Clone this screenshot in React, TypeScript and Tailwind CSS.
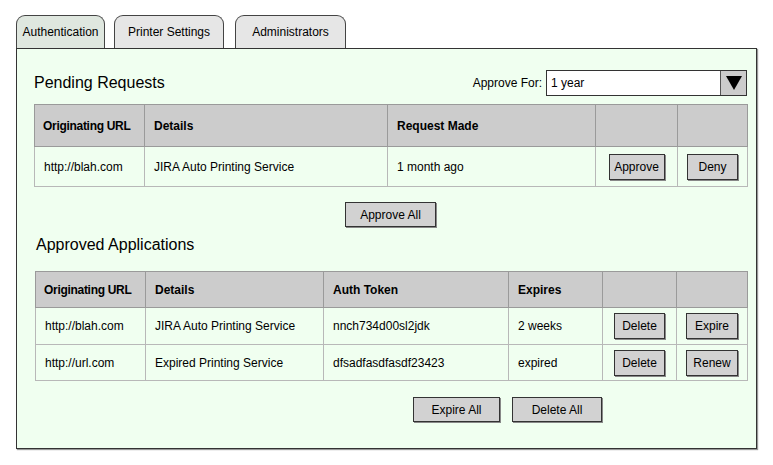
import React from "react";

const font = { fontFamily: '"Liberation Sans", Arial, sans-serif' };

function Btn({ children, className = "" }: { children: React.ReactNode; className?: string }) {
  return (
    <div
      className={
        "flex items-center justify-center bg-[#d2d2d2] border border-[#333] text-[12px] text-black shadow-[1px_1px_0_#888] " +
        className
      }
    >
      {children}
    </div>
  );
}

export default function App() {
  const th = "bg-[#cccccc] border border-[#9a9a9a] text-left font-bold text-[12px] px-[9px] align-middle whitespace-nowrap";
  const th1 = "bg-[#cccccc] border border-[#9a9a9a] text-left font-bold text-[12px] pl-[8px] pr-0 align-middle whitespace-nowrap tracking-[-0.3px]";
  const td = "border border-[#b8b8b8] text-[12px] px-[9px] align-middle whitespace-nowrap";
  return (
    <div className="w-[773px] h-[465px] bg-white text-black" style={font}>
      <div className="pt-[15px] pl-[16px]">
        <div className="flex items-end h-[33px]">
          <div className="w-[89px] h-[33px] bg-[#dfe7df] border border-[#444] border-b-0 rounded-t-[9px] flex items-center justify-center text-[12px] relative z-10">
            Authentication
          </div>
          <div className="ml-[9px] w-[110px] h-[33px] bg-[#e6e6e6] border border-[#444] border-b-0 rounded-t-[9px] flex items-center justify-center text-[12px]">
            Printer Settings
          </div>
          <div className="ml-[11px] w-[111px] h-[33px] bg-[#e6e6e6] border border-[#444] border-b-0 rounded-t-[9px] flex items-center justify-center text-[12px]">
            Administrators
          </div>
        </div>
        <div className="w-[741px] h-[401px] bg-[#f0fff0] border border-[#333] shadow-[1px_1px_1px_#999] pl-[17px] pr-[9px] pt-[21px]">
          <div className="flex items-center h-[26px]">
            <div className="text-[16px] flex-1">Pending Requests</div>
            <div className="text-[12px] mr-[4px]">Approve For:</div>
            <div className="w-[201px] h-[26px] bg-white border border-[#333] flex">
              <div className="flex-1 flex items-center pl-[4px] text-[12px]">1 year</div>
              <div className="w-[26px] bg-[#cccccc] border-l border-[#555] flex items-center justify-center">
                <svg width="16" height="14" viewBox="0 0 16 14">
                  <polygon points="0,0 16,0 8,14" fill="#000" />
                </svg>
              </div>
            </div>
          </div>
          <table className="mt-[8px] border-collapse w-[713px] table-fixed">
            <colgroup>
              <col className="w-[110px]" />
              <col className="w-[243px]" />
              <col className="w-[208px]" />
              <col className="w-[82px]" />
              <col className="w-[70px]" />
            </colgroup>
            <thead>
              <tr className="h-[42px]">
                <th className={th1}>Originating URL</th>
                <th className={th}>Details</th>
                <th className={th}>Request Made</th>
                <th className={th}></th>
                <th className={th}></th>
              </tr>
            </thead>
            <tbody>
              <tr className="h-[40px]">
                <td className={td}>http://blah.com</td>
                <td className={td}>JIRA Auto Printing Service</td>
                <td className={td}>1 month ago</td>
                <td className={td + " px-0"}>
                  <div className="flex justify-center">
                    <Btn className="w-[56px] h-[26px]">Approve</Btn>
                  </div>
                </td>
                <td className={td + " px-0"}>
                  <div className="flex justify-center">
                    <Btn className="w-[52px] h-[26px]">Deny</Btn>
                  </div>
                </td>
              </tr>
            </tbody>
          </table>
          <div className="w-[713px] flex justify-center mt-[15px]">
            <Btn className="w-[91px] h-[25px]">Approve All</Btn>
          </div>
          <div className="text-[16px] ml-[2px] mt-[7px] h-[22px] leading-[22px]">Approved Applications</div>
          <table className="mt-[15px] ml-[1px] border-collapse w-[712px] table-fixed">
            <colgroup>
              <col className="w-[110px]" />
              <col className="w-[178px]" />
              <col className="w-[185px]" />
              <col className="w-[94px]" />
              <col className="w-[74px]" />
              <col className="w-[71px]" />
            </colgroup>
            <thead>
              <tr className="h-[36px]">
                <th className={th1}>Originating URL</th>
                <th className={th}>Details</th>
                <th className={th}>Auth Token</th>
                <th className={th}>Expires</th>
                <th className={th}></th>
                <th className={th}></th>
              </tr>
            </thead>
            <tbody>
              <tr className="h-[37px]">
                <td className={td}>http://blah.com</td>
                <td className={td}>JIRA Auto Printing Service</td>
                <td className={td}>nnch734d00sl2jdk</td>
                <td className={td}>2 weeks</td>
                <td className={td + " px-0"}>
                  <div className="flex justify-center">
                    <Btn className="w-[51px] h-[26px]">Delete</Btn>
                  </div>
                </td>
                <td className={td + " px-0"}>
                  <div className="flex justify-center">
                    <Btn className="w-[58px] h-[26px]">Expire</Btn>
                  </div>
                </td>
              </tr>
              <tr className="h-[36px]">
                <td className={td}>http://url.com</td>
                <td className={td}>Expired Printing Service</td>
                <td className={td}>dfsadfasdfasdf23423</td>
                <td className={td}>expired</td>
                <td className={td + " px-0"}>
                  <div className="flex justify-center">
                    <Btn className="w-[51px] h-[26px]">Delete</Btn>
                  </div>
                </td>
                <td className={td + " px-0"}>
                  <div className="flex justify-center">
                    <Btn className="w-[58px] h-[26px]">Renew</Btn>
                  </div>
                </td>
              </tr>
            </tbody>
          </table>
          <div className="w-[713px] flex justify-end pr-[145px] mt-[16px] gap-[12px]">
            <Btn className="w-[87px] h-[25px]">Expire All</Btn>
            <Btn className="w-[90px] h-[25px]">Delete All</Btn>
          </div>
        </div>
      </div>
    </div>
  );
}
